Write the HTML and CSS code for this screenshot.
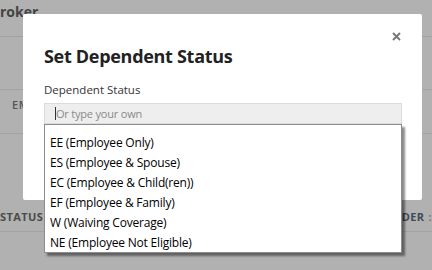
FILE: index.html
```html
<!DOCTYPE html>
<html>
<head>
<meta charset="utf-8">
<link rel="stylesheet" href="styles.css">
</head>
<body>
<div class="page">
  <div class="topbar"><span class="brand">roker</span></div>
  <div class="band"></div>
  <div class="thead"><span class="th">EMP</span></div>
  <div class="rows"></div>
  <div class="thead2"><span class="th2">STATUS</span><span class="th3">DER</span><span class="th4">:</span></div>
</div>

<div class="modal">
  <button class="close" aria-label="Close">
    <svg width="9" height="9" viewBox="0 0 9 9"><path d="M1 1 L8 8 M8 1 L1 8" stroke="#7a7a7a" stroke-width="2" stroke-linecap="butt"/></svg>
  </button>
  <h2 class="title">Set Dependent Status</h2>
  <div class="label">Dependent Status</div>
  <div class="combo">
    <div class="input"><span class="caret"></span><span class="ph">Or type your own</span></div>
    <ul class="list">
      <li>EE (Employee Only)</li>
      <li>ES (Employee &amp; Spouse)</li>
      <li>EC (Employee &amp; Child(ren))</li>
      <li>EF (Employee &amp; Family)</li>
      <li>W (Waiving Coverage)</li>
      <li>NE (Employee Not Eligible)</li>
    </ul>
  </div>
</div>
</body>
</html>
```
FILE: styles.css
```css
html, body {
  margin: 0;
  padding: 0;
}
body {
  width: 432px;
  height: 270px;
  overflow: hidden;
  background: #b1b1b1;
  font-family: "Open Sans", "Liberation Sans", sans-serif;
  position: relative;
}
.page {
  display: flex;
  flex-direction: column;
}
.topbar {
  height: 36px;
  border-bottom: 1px solid #a2a2a2;
  display: flex;
  align-items: flex-start;
}
.brand {
  font-weight: 700;
  font-size: 14px;
  color: #444;
  line-height: 18px;
  margin-top: 3px;
}
.band {
  height: 52px;
  border-bottom: 1px solid #a4a4a4;
}
.thead {
  height: 43px;
  border-bottom: 1px solid #a4a4a4;
  display: flex;
  align-items: flex-start;
}
.th {
  font-size: 11px;
  font-weight: 600;
  color: #555;
  margin-left: 12px;
  margin-top: 8px;
  line-height: 14px;
  letter-spacing: 0.5px;
}
.rows {
  height: 72px;
}
.thead2 {
  height: 25px;
  border-bottom: 1px solid #a2a2a2;
  display: flex;
  align-items: flex-start;
  font-size: 11px;
  font-weight: 700;
  color: #4b4b4b;
  letter-spacing: 0.4px;
  line-height: 14px;
}
.th2 { margin-left: 0; margin-top: 4px; }
.th3 { margin-left: auto; margin-right: 4px; margin-top: 4px; color: #3f4a58; }
.th4 { margin-right: 0; margin-top: 4px; color: #777; }

.modal {
  position: absolute;
  left: 23px;
  top: 14px;
  width: 399px;
  height: 186px;
  background: #fff;
  border-radius: 2px;
  box-sizing: border-box;
  padding: 28px 21px 0 21px;
}
.close {
  position: absolute;
  right: 21px;
  top: 18px;
  border: 0;
  background: transparent;
  padding: 0;
  line-height: 0;
}
.title {
  margin: 0;
  font-size: 18px;
  font-weight: 700;
  line-height: 28px;
  color: #222;
  letter-spacing: -0.3px;
}
.label {
  margin-top: 12px;
  font-size: 11.5px;
  line-height: 16px;
  color: #333;
}
.combo {
  margin-top: 5px;
  position: relative;
  width: 358px;
}
.input {
  height: 21px;
  box-sizing: border-box;
  background: #eeeeee;
  border: 1px solid #dcdcdc;
  display: flex;
  align-items: center;
  padding-left: 10px;
  font-size: 11px;
  letter-spacing: -0.2px;
  color: #8a8a8a;
}
.caret {
  width: 1px;
  height: 13px;
  background: #333;
}
.list {
  position: absolute;
  left: 0;
  top: 21px;
  width: 358px;
  box-sizing: border-box;
  margin: 0;
  padding: 7px 0 0 0;
  list-style: none;
  background: #fff;
  border: 1px solid #8c8c8c;
  box-shadow: 3px 3px 2px rgba(0, 0, 0, 0.45);
}
.list li {
  height: 20px;
  line-height: 22px;
  padding-left: 5px;
  font-size: 12px;
  letter-spacing: -0.2px;
  color: #000;
}
```
